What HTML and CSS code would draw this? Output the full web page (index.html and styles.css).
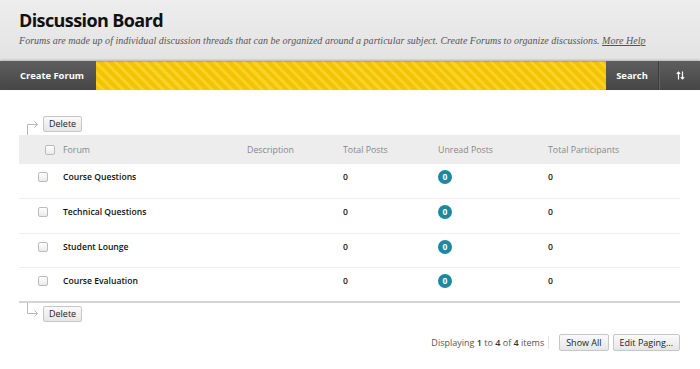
FILE: index.html
```html
<!DOCTYPE html>
<html lang="en">
<head>
    <meta charset="UTF-8">
    <title>Discussion Board</title>
    <link rel="stylesheet" href="styles.css">
</head>
<body>
    <header class="page-header">
        <h1>Discussion Board</h1>
        <p class="page-help">Forums are made up of individual discussion threads that can be organized around a particular subject. Create Forums to organize discussions. <a href="#">More Help</a></p>
    </header>

    <nav class="toolbar">
        <a class="tool-btn create" href="#">Create Forum</a>
        <div class="stripes"></div>
        <a class="tool-btn search" href="#">Search</a>
        <a class="tool-btn sort" href="#">
            <svg width="9" height="9" viewBox="0 0 9 9" fill="none" stroke="#fff" stroke-width="1.2">
                <path d="M2.5 8.5V1M0.8 2.8L2.5 1L4.2 2.8"/>
                <path d="M6.5 0.5V8M4.8 6.2L6.5 8L8.2 6.2"/>
            </svg>
        </a>
    </nav>

    <main class="content">
        <div class="actions top">
            <svg class="bracket" width="13" height="15" viewBox="0 0 13 15" fill="none" stroke="#b8b8b8" stroke-width="1">
                <path d="M1.5 15V4.5H11"/>
                <path d="M8.5 1.5L11.5 4.5L8.5 7.5"/>
            </svg>
            <button class="small-btn">Delete</button>
        </div>

        <table class="grid">
            <thead>
                <tr>
                    <th class="col-check"><span class="check"></span></th>
                    <th class="col-forum">Forum</th>
                    <th class="col-desc">Description</th>
                    <th class="col-total">Total Posts</th>
                    <th class="col-unread">Unread Posts</th>
                    <th>Total Participants</th>
                </tr>
            </thead>
            <tbody>
                <tr>
                    <td class="col-check"><span class="check"></span></td>
                    <td>Course Questions</td>
                    <td></td>
                    <td>0</td>
                    <td><span class="badge">0</span></td>
                    <td>0</td>
                </tr>
                <tr>
                    <td class="col-check"><span class="check"></span></td>
                    <td>Technical Questions</td>
                    <td></td>
                    <td>0</td>
                    <td><span class="badge">0</span></td>
                    <td>0</td>
                </tr>
                <tr>
                    <td class="col-check"><span class="check"></span></td>
                    <td>Student Lounge</td>
                    <td></td>
                    <td>0</td>
                    <td><span class="badge">0</span></td>
                    <td>0</td>
                </tr>
                <tr>
                    <td class="col-check"><span class="check"></span></td>
                    <td>Course Evaluation</td>
                    <td></td>
                    <td>0</td>
                    <td><span class="badge">0</span></td>
                    <td>0</td>
                </tr>
            </tbody>
        </table>

        <div class="actions bottom">
            <svg class="bracket" width="13" height="15" viewBox="0 0 13 15" fill="none" stroke="#b8b8b8" stroke-width="1">
                <path d="M1.5 0V10.5H11"/>
                <path d="M8.5 7.5L11.5 10.5L8.5 13.5"/>
            </svg>
            <button class="small-btn">Delete</button>
        </div>

        <div class="paging">
            <span class="paging-info">Displaying <b>1</b> to <b>4</b> of <b>4</b> items</span>
            <button class="small-btn">Show All</button>
            <button class="small-btn">Edit Paging...</button>
        </div>
    </main>
</body>
</html>
```

FILE: styles.css
```css
/* Base */
body {
    margin: 0;
    font-family: "Open Sans", "DejaVu Sans", sans-serif;
    color: #222;
    background: #fff;
}

/* Page header */
.page-header {
    height: 61px;
    box-sizing: border-box;
    padding: 8px 19px 0;
    background: linear-gradient(#ededed, #e3e3e3);
}

.page-header h1 {
    margin: 0;
    font-size: 18px;
    font-weight: 700;
    letter-spacing: -0.6px;
    color: #111;
    line-height: 24px;
}

.page-help {
    margin: 3px 0 0;
    font-family: "Liberation Serif", "Times New Roman", serif;
    font-style: italic;
    font-size: 10px;
    letter-spacing: 0.02px;
    color: #555;
    white-space: nowrap;
}

.page-help a {
    color: #555;
}

/* Toolbar */
.toolbar {
    display: flex;
    height: 29px;
    background: linear-gradient(#5e5e5e, #464646);
    box-shadow: 0 -1px 2px rgba(0, 0, 0, 0.2);
}

.tool-btn {
    display: flex;
    align-items: center;
    color: #fff;
    text-decoration: none;
    font-size: 9.4px;
    font-weight: 700;
}

.tool-btn.create {
    width: 96px;
    padding-left: 20px;
    box-sizing: border-box;
}

.tool-btn.search {
    width: 52px;
    justify-content: center;
    border-right: 1px solid #3c3c3c;
}

.tool-btn.sort {
    width: 40px;
    justify-content: center;
    border-left: 1px solid #626262;
}

.stripes {
    flex: 1;
    background: repeating-linear-gradient(45deg, #f3c500 0, #f3c500 4px, #f8d22a 4px, #f8d22a 7px);
    box-shadow: inset 0 1px 1px rgba(0, 0, 0, 0.15);
}

/* Content */
.content {
    padding: 26px 20px 0 19px;
}

.actions {
    display: flex;
    padding-left: 7px;
}

.actions.top {
    align-items: flex-end;
}

.actions.top .bracket {
    margin-bottom: -3px;
}

.actions.bottom {
    align-items: flex-start;
    margin-top: 3px;
}

.actions.bottom .bracket {
    margin-top: -3px;
}

.bracket {
    margin-right: 4px;
}

.small-btn {
    margin: 0;
    font-family: "Open Sans", "DejaVu Sans", sans-serif;
    font-size: 9px;
    color: #222;
    padding: 2px 5px;
    line-height: 10px;
    border: 1px solid #c6c6c6;
    border-radius: 2px;
    background: linear-gradient(#fafafa, #e6e6e6);
}

/* Grid */
.grid {
    width: 100%;
    border-collapse: collapse;
    font-size: 8.6px;
    margin-top: 3px;
}

.grid th {
    height: 29px;
    padding: 0;
    text-align: left;
    font-size: 8.8px;
    font-weight: 400;
    color: #888;
    background: #ededed;
}

.grid td {
    height: 34.5px;
    box-sizing: border-box;
    padding: 6px 0 0;
    vertical-align: top;
    line-height: 14px;
    border-bottom: 1px solid #eee;
    color: #111;
    font-weight: 600;
}

.grid tbody tr:last-child td {
    border-bottom: 2px solid #d4d4d4;
}

.grid .col-check {
    width: 44px;
}

.col-forum { width: 184px; }
.col-desc { width: 96px; }
.col-total { width: 95px; }
.col-unread { width: 110px; }

.check {
    display: block;
    width: 8px;
    height: 8px;
    border: 1px solid #bbb;
    border-radius: 2px;
    background: linear-gradient(#fff, #eaeaea);
}

th .check {
    margin-left: 26px;
}

td .check {
    margin: 2px 0 0 19px;
}

.badge {
    display: inline-block;
    width: 14px;
    height: 14px;
    line-height: 14px;
    border-radius: 50%;
    background: #1b8aa0;
    color: #fff;
    text-align: center;
    font-size: 8.5px;
    font-weight: 700;
}

/* Paging */
.paging {
    display: flex;
    justify-content: flex-end;
    align-items: center;
    gap: 4px;
    margin-top: 12px;
}

.paging .small-btn {
    padding: 3px 6px 2px;
}

.paging-info {
    font-size: 9px;
    color: #555;
    padding-right: 4px;
    margin-right: 6px;
    border-right: 1px solid #e4e4e4;
}

.paging-info b {
    font-weight: 600;
    color: #333;
}
```
